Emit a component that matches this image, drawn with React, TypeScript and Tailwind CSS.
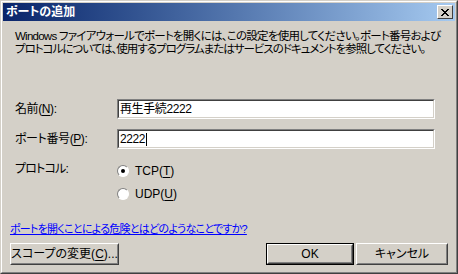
import type { ReactNode } from 'react';

const font = "font-['Liberation_Sans','Noto_Sans_CJK_JP',sans-serif] [font-feature-settings:'palt']";

const Key = ({ children }: { children: ReactNode }) => <span className="underline underline-offset-2">{children}</span>;

const Field = ({ value, caret }: { value: string; caret?: boolean }) => (
  <div className="w-[318px] h-[20px] border border-t-[#808080] border-l-[#808080] border-r-white border-b-white">
    <div className="h-full border border-t-[#404040] border-l-[#404040] border-r-[#d4d0c8] border-b-[#d4d0c8] bg-white flex items-center pl-[1px] text-[12px] text-black">
      {value}
      {caret && <span className="inline-block w-[1px] h-[13px] bg-black ml-[1px]" />}
    </div>
  </div>
);

const Radio = ({ checked, children }: { checked?: boolean; children: ReactNode }) => (
  <div className="flex items-center gap-[6px] h-[16px]">
    <div className="w-[12px] h-[12px] rounded-full border border-t-[#808080] border-l-[#808080] border-r-white border-b-white flex items-center justify-center bg-white">
      {checked && <div className="w-[4px] h-[4px] rounded-full bg-black" />}
    </div>
    <span className="text-[12px]">{children}</span>
  </div>
);

const Button = ({ children, def, w }: { children: ReactNode; def?: boolean; w: string }) => (
  <div className={`${w} h-[22px] ${def ? 'border border-black' : ''}`}>
    <div className="h-full border border-t-white border-l-white border-r-[#404040] border-b-[#404040]">
      <div className="h-full border border-t-[#d4d0c8] border-l-[#d4d0c8] border-r-[#808080] border-b-[#808080] flex items-center justify-center text-[12px] text-black whitespace-nowrap">
        {children}
      </div>
    </div>
  </div>
);

export default function App() {
  return (
    <div className={`w-[458px] h-[274px] overflow-hidden bg-[#d4d0c8] ${font} text-black border border-t-[#d4d0c8] border-l-[#d4d0c8] border-r-[#404040] border-b-[#404040]`}>
      <div className="h-full border border-t-white border-l-white border-r-[#808080] border-b-[#808080] p-[1px] flex flex-col">
        <div className="h-[18px] bg-linear-to-r from-[#0a246a] to-[#a6caf0] flex items-center justify-between pl-[3px] pr-[2px]">
          <span className="text-white font-bold text-[12px] leading-none">ポートの追加</span>
          <div className="w-[16px] h-[14px] border border-t-white border-l-white border-r-[#404040] border-b-[#404040] bg-[#d4d0c8] flex items-center justify-center">
            <svg width="8" height="7" viewBox="0 0 8 7" shapeRendering="crispEdges">
              <path d="M0 0h2v1h1v1h2v-1h1v-1h2v1h-1v1h-1v1h-1v1h1v1h1v1h1v1h-2v-1h-1v-1h-2v1h-1v1h-2v-1h1v-1h1v-1h1v-1h-1v-1h-1v-1h-1z" fill="black" />
            </svg>
          </div>
        </div>

        <div className="flex flex-col px-[12px]">
          <p className="mt-[9px] text-[11.5px] leading-[13px] whitespace-nowrap">
            <span className="tracking-[-0.75px]">Windows ファイアウォールでポートを開くには、この設定を使用してください。ポート番号および</span>
            <br />
            <span className="tracking-[-1px]">プロトコルについては、使用するプログラムまたはサービスのドキュメントを参照してください。</span>
          </p>

          <div className="mt-[43px] grid grid-cols-[102px_318px] gap-y-[10px] items-center text-[12px] tracking-[-0.4px]">
            <span>名前(<Key>N</Key>):</span>
            <Field value="再生手続2222" />
            <span>ポート番号(<Key>P</Key>):</span>
            <Field value="2222" caret />
          </div>

          <div className="mt-[13px] grid grid-cols-[102px_318px] text-[12px]">
            <span className="leading-[14px] tracking-[-0.8px]">プロトコル:</span>
            <div className="flex flex-col gap-[7px] pt-[1px]">
              <Radio checked>TCP(<Key>T</Key>)</Radio>
              <Radio>UDP(<Key>U</Key>)</Radio>
            </div>
          </div>

          <a className="mt-[20px] -ml-[5px] text-[11px] leading-[14px] tracking-[-0.75px] text-[#0000ff] underline whitespace-nowrap">
            ポートを開くことによる危険とはどのようなことですか?
          </a>

          <div className="mt-[7px] -ml-[5px] -mr-[5px] flex items-center">
            <Button w="w-[109px]">スコープの変更(<Key>C</Key>)...</Button>
            <div className="ml-auto flex gap-[2px]">
              <Button w="w-[88px]" def>OK</Button>
              <Button w="w-[92px]">キャンセル</Button>
            </div>
          </div>
        </div>
      </div>
    </div>
  );
}
